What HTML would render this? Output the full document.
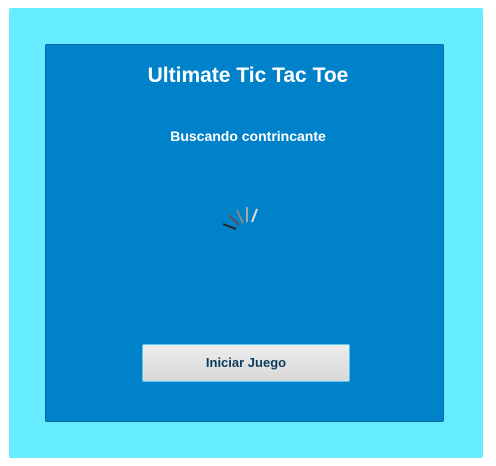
<!DOCTYPE html>
<html><head><style>
body{margin:0;width:496px;height:466px;background:#fff;position:relative;overflow:hidden;font-family:"Liberation Sans",sans-serif}
.outer{position:absolute;left:9px;top:8px;width:474px;height:450px;background:#66ecff;border-radius:2px}
.inner{position:absolute;left:45px;top:44px;width:397px;height:376px;background:#0082cb;border:1px solid #006aa6;border-radius:2px}
h1{position:absolute;left:0;width:100%;top:64px;margin:0;text-align:center;color:#fff;font-size:21px;font-weight:bold;letter-spacing:0}
.sub{position:absolute;left:0;width:100%;top:128px;text-align:center;color:#fff;font-size:14px;font-weight:bold}
.btn{position:absolute;left:142px;top:344px;width:206px;height:36px;background:linear-gradient(#ededed,#d8d8d8);border:1px solid #5cc8ef;border-radius:2px;text-align:center;line-height:36px;color:#0b3a5c;font-size:13px;font-weight:bold}
</style></head><body>
<div class="outer"></div>
<div class="inner"></div>
<h1>Ultimate Tic Tac Toe</h1>
<div class="sub">Buscando contrincante</div>
<svg style="position:absolute;left:0;top:0" width="496" height="466" stroke-width="2">
<line x1="223" y1="224" x2="236" y2="229" stroke="#222"/>
<line x1="229" y1="215" x2="239" y2="225" stroke="#555"/>
<line x1="237" y1="210" x2="243" y2="223" stroke="#888"/>
<line x1="247" y1="207" x2="247" y2="222" stroke="#aaa"/>
<line x1="257" y1="209" x2="252" y2="222" stroke="#ddd"/>
</svg>
<div class="btn">Iniciar Juego</div>
</body></html>
